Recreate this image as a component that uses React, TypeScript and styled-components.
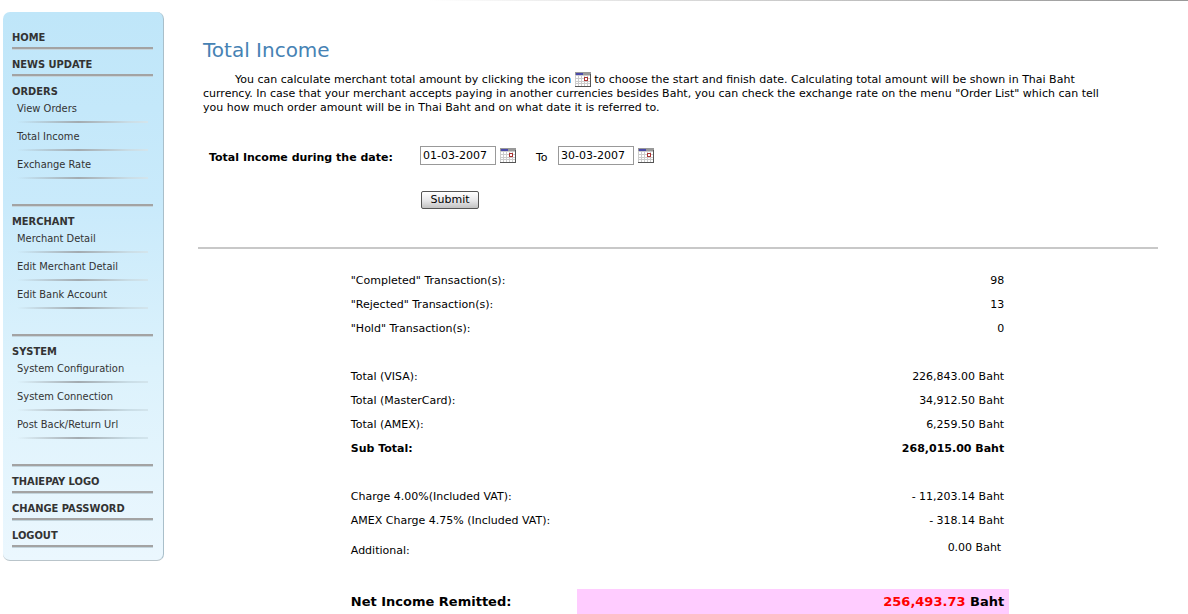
import React from "react";
import styled, { createGlobalStyle } from "styled-components";

const GlobalStyle = createGlobalStyle`
  * { box-sizing: border-box; }
  body {
    margin: 0;
    background: #fff;
    color: #000;
    font: 11px/14px Verdana, "DejaVu Sans", sans-serif;
  }
`;

const TopEdge = styled.div`
  height: 1px;
  background: linear-gradient(to right, #fff 36%, #ccc 65%, #999 95%);
`;

const Page = styled.div`
  display: flex;
  align-items: flex-start;
  padding: 11px 30px 0 3px;
`;

const Sidebar = styled.nav`
  flex: none;
  width: 161px;
  padding: 10px 10px 13px 9px;
  border-right: 1px solid #a9bfca;
  border-bottom: 1px solid #b9c4ca;
  border-radius: 7px;
  background: linear-gradient(#bfe6f9, #c9eafb 35%, #dcf2fc 65%, #ebf7fe);
  color: #333;
  font-family: Tahoma, "DejaVu Sans Condensed", "Noto Sans", sans-serif;

  a { color: inherit; text-decoration: none; }
`;

const Section = styled.div<{ $tall?: boolean }>`
  padding: 9px 0 ${(p) => (p.$tall ? 21 : 2)}px;
  border-bottom: 2px solid #a3a3a3;
  box-shadow: 0 1px 0 #c3d4dc;
  font-weight: bold;
`;

const SubList = styled.ul`
  margin: 0;
  padding: 0 5px;
  list-style: none;
  font-weight: normal;
`;

const SubItem = styled.li`
  padding: 3px 0 4px;

  &::after {
    content: "";
    display: block;
    height: 2px;
    margin-top: 5px;
    background: linear-gradient(to right, transparent, #a3abb0 47%, #c9dde6 85%, #d3e5ed);
  }
`;

const Main = styled.main`
  flex: 1;
  min-width: 0;
  padding: 27px 0 0 34px;
`;

const Title = styled.h1`
  margin: 0 5px 11px;
  color: #4682b4;
  font-size: 20px;
  line-height: 22px;
  font-weight: normal;
`;

const Intro = styled.p`
  margin: 0 5px;
  padding-right: 34px;
  line-height: 14px;
  text-indent: 32px;
`;

const Icon = styled.svg`
  width: 16px;
  height: 15px;
  vertical-align: middle;
`;

const DateForm = styled.form`
  padding: 31px 11px 38px;
  border-bottom: 2px solid #c8c8c8;
`;

const DateRow = styled.div`
  display: flex;
  align-items: center;
`;

const DateLabel = styled.label`
  width: 211px;
  padding-top: 4px;
  font-weight: bold;
`;

const ToLabel = styled.label`
  width: 42px;
  padding: 4px 0 0 20px;
`;

const DateInput = styled.input`
  width: 76px;
  height: 19px;
  padding: 0 2px;
  border: 1px solid #999;
  font: inherit;
`;

const IconButton = styled.button`
  display: flex;
  margin-left: 4px;
  padding: 0;
  border: 0;
  background: none;
`;

const SubmitButton = styled.button`
  display: block;
  width: 58px;
  height: 18px;
  margin: 26px 0 0 212px;
  padding: 0;
  border: 1px solid #555;
  border-radius: 2px;
  background: linear-gradient(#fff, #e6e6e8 55%, #c2c2c2);
  font: inherit;
`;

const Summary = styled.table`
  width: 69%;
  margin: 20px auto 0;
  border-collapse: collapse;
`;

const Row = styled.tr<{ $bold?: boolean }>`
  height: 24px;
  font-weight: ${(p) => (p.$bold ? "bold" : "normal")};
`;

const AdditionalRow = styled(Row)`
  height: 36px;
  td { padding-right: 8px; padding-bottom: 6px; }
`;

const NetRow = styled(Row)`
  height: 25px;
  font-size: 13px;
  td { background: #fcf; }
`;

const Label = styled.th`
  width: 230px;
  padding: 0 4px;
  font-weight: inherit;
  text-align: left;
  white-space: nowrap;
`;

const Value = styled.td`
  padding: 0 5px;
  text-align: right;
`;

const Spacer = styled.td<{ $short?: boolean }>`
  height: ${(p) => (p.$short ? 20 : 24)}px;
  padding: 0;
`;

const Amount = styled.span`
  color: #f00;
`;

function CalendarIcon() {
  return (
    <Icon viewBox="0 0 16 15" shapeRendering="crispEdges" aria-hidden="true">
      <path fill="#ccc" d="M0 0h16v15H0z" />
      <path fill="#999" d="M0 0h16v3H0z" />
      <path fill="#4a4aaa" d="M1 1h7v2H1z" />
      <path
        fill="#fff"
        d="M1 4h2v2H1zM4 4h2v2H4zM7 4h2v2H7zM10 4h2v2h-2zM13 4h2v2h-2zM1 7h2v2H1zM4 7h2v2H4zM7 7h2v2H7zM10 7h2v2h-2zM13 7h2v2h-2zM1 10h2v1H1zM4 10h2v1H4zM7 10h2v1H7zM10 10h2v1h-2zM13 10h2v1h-2zM1 12h2v2H1zM4 12h2v2H4zM7 12h2v2H7zM10 12h2v2h-2zM13 12h2v2h-2z"
      />
      <path fill="#a33" d="M9 5h4v4H9z" />
      <path fill="#fff" d="M10 6h2v2h-2z" />
      <path fill="#555" d="M15 2h1v13H0v-1h15z" />
    </Icon>
  );
}

const sections = [
  { title: "HOME" },
  { title: "NEWS UPDATE" },
  { title: "ORDERS", items: ["View Orders", "Total Income", "Exchange Rate"] },
  { title: "MERCHANT", items: ["Merchant Detail", "Edit Merchant Detail", "Edit Bank Account"] },
  { title: "SYSTEM", items: ["System Configuration", "System Connection", "Post Back/Return Url"] },
  { title: "THAIEPAY LOGO" },
  { title: "CHANGE PASSWORD" },
  { title: "LOGOUT" },
];

const groups = [
  [
    ['"Completed" Transaction(s):', "98"],
    ['"Rejected" Transaction(s):', "13"],
    ['"Hold" Transaction(s):', "0"],
  ],
  [
    ["Total (VISA):", "226,843.00 Baht"],
    ["Total (MasterCard):", "34,912.50 Baht"],
    ["Total (AMEX):", "6,259.50 Baht"],
    ["Sub Total:", "268,015.00 Baht"],
  ],
  [
    ["Charge 4.00%(Included VAT):", "- 11,203.14 Baht"],
    ["AMEX Charge 4.75% (Included VAT):", "- 318.14 Baht"],
  ],
];

export default function App() {
  return (
    <>
      <GlobalStyle />
      <TopEdge />
      <Page>
        <Sidebar>
          {sections.map(({ title, items }) => (
            <Section key={title} $tall={!!items}>
              {items ? title : <a href="#">{title}</a>}
              {items && (
                <SubList>
                  {items.map((item) => (
                    <SubItem key={item}>
                      <a href="#">{item}</a>
                    </SubItem>
                  ))}
                </SubList>
              )}
            </Section>
          ))}
        </Sidebar>
        <Main>
          <Title>Total Income</Title>
          <Intro>
            You can calculate merchant total amount by clicking the icon <CalendarIcon /> to choose
            the start and finish date. Calculating total amount will be shown in Thai Baht currency.
            In case that your merchant accepts paying in another currencies besides Baht, you can
            check the exchange rate on the menu "Order List" which can tell you how much order
            amount will be in Thai Baht and on what date it is referred to.
          </Intro>
          <DateForm onSubmit={(e) => e.preventDefault()}>
            <DateRow>
              <DateLabel htmlFor="from">Total Income during the date:</DateLabel>
              <DateInput id="from" defaultValue="01-03-2007" />
              <IconButton type="button" aria-label="Choose start date">
                <CalendarIcon />
              </IconButton>
              <ToLabel htmlFor="to">To</ToLabel>
              <DateInput id="to" defaultValue="30-03-2007" />
              <IconButton type="button" aria-label="Choose finish date">
                <CalendarIcon />
              </IconButton>
            </DateRow>
            <SubmitButton type="submit">Submit</SubmitButton>
          </DateForm>
          <Summary>
            <tbody>
              {groups.map((rows, i) => (
                <React.Fragment key={i}>
                  {i > 0 && (
                    <tr>
                      <Spacer colSpan={2} />
                    </tr>
                  )}
                  {rows.map(([label, value]) => (
                    <Row key={label} $bold={label === "Sub Total:"}>
                      <Label scope="row">{label}</Label>
                      <Value>{value}</Value>
                    </Row>
                  ))}
                </React.Fragment>
              ))}
              <AdditionalRow>
                <Label scope="row">Additional:</Label>
                <Value>0.00 Baht</Value>
              </AdditionalRow>
              <tr>
                <Spacer colSpan={2} $short />
              </tr>
              <NetRow $bold>
                <Label scope="row">Net Income Remitted:</Label>
                <Value>
                  <Amount>256,493.73</Amount> Baht
                </Value>
              </NetRow>
            </tbody>
          </Summary>
        </Main>
      </Page>
    </>
  );
}
